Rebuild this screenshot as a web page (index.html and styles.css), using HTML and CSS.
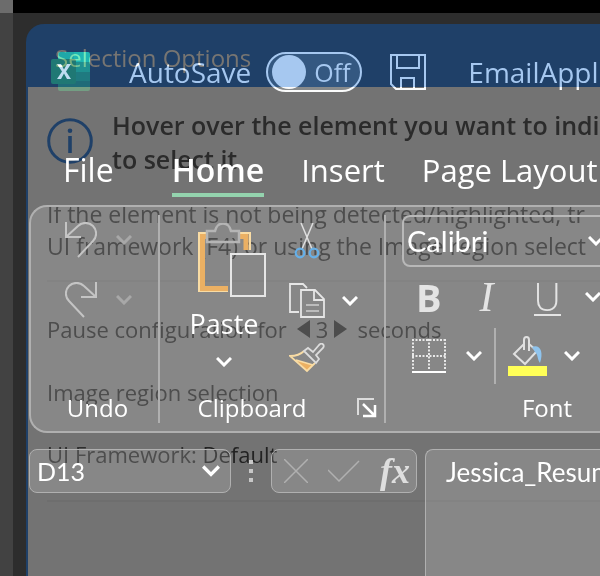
FILE: index.html
```html
<!DOCTYPE html>
<html lang="en">
<head>
<meta charset="utf-8">
<meta name="viewport" content="width=device-width, initial-scale=1">
<title>Selection Options</title>
<link rel="stylesheet" href="styles.css">
</head>
<body>
<div class="corner"></div>
<div class="topbar"></div>
<div class="side"></div>
<div class="desktop">
<div class="window">

<section class="dialog">
  <h1 class="dialog-title">Selection Options</h1>
  <div class="dialog-body">
    <div class="hint">
      <svg class="info" width="46" height="46" viewBox="0 0 46 46" fill="none" stroke="#1f4068" stroke-width="3"><circle cx="23" cy="23" r="21.3"/><path d="M23 18v17" stroke-width="3.6"/><circle cx="23" cy="12.7" r="2.3" fill="#1f4068" stroke="none"/></svg>
      <h2 class="hint-title">Hover over the element you want to indi<br>to select it.</h2>
    </div>
    <p class="note">If the element is not being detected/highlighted, tr<br>UI framework (F4) or using the Image region select</p>
    <div class="pause">
      <span>Pause configuration for</span>
      <span class="stepper">
        <button class="bare" aria-label="Less"><svg width="13" height="18" viewBox="0 0 13 18"><path d="M13 0v18L0 9z" fill="#2e2e2e"/></svg></button>
        <span>3</span>
        <button class="bare" aria-label="More"><svg width="13" height="18" viewBox="0 0 13 18"><path d="M0 0v18L13 9z" fill="#2e2e2e"/></svg></button>
      </span>
      <span>seconds</span>
    </div>
    <p class="option">Image region selection</p>
    <p class="option">UI Framework: <span class="value">Default</span></p>
    <hr class="rule">
  </div>
</section>

<section class="excel">
  <header class="appbar">
    <svg class="logo" width="40" height="40" viewBox="0 0 40 40"><path d="M7 2q0-2 2-2h14v19H7z" fill="#006840"/><path d="M23 0h14q2 0 2 2v8H23z" fill="#00764a"/><path d="M23 10h16v10H23z" fill="#005028"/><path d="M7 20h32v9H7z" fill="#003a18"/><path d="M7 29h32v8q0 2-2 2H9q-2 0-2-2z" fill="#002b10"/><rect y="7" width="25" height="25" rx="2" fill="#00380c"/><path d="M6 12h4l3 5.500 3-5.500h4l-5 7.500 5 7.500h-4l-3-5.500-3 5.500H6l5-7.500z" fill="#a09c88"/></svg>
    <span class="autosave" id="autosave">AutoSave</span>
    <button class="toggle" role="switch" aria-checked="false" aria-labelledby="autosave"><span class="knob"></span>Off</button>
    <button class="bare save" aria-label="Save"><svg width="36" height="36" viewBox="0 0 36 36" fill="none" stroke="#878888" stroke-width="2"><path d="M1 1h34v34H6l-5-5zM7 1v13h22V1M11 35V24h13v11"/></svg></button>
    <span class="filename">EmailAppl</span>
  </header>

  <nav class="tabs">
    <a class="tab file" href="#file">File</a>
    <a class="tab current" href="#home">Home</a>
    <a class="tab" href="#insert">Insert</a>
    <a class="tab" href="#layout">Page Layout</a>
  </nav>

  <div class="ribbon">
    <div class="group undo-group">
      <div class="tools undo-tools">
        <button class="bare" aria-label="Undo"><svg width="32" height="36" viewBox="0 0 32 36" fill="none" stroke="#c4c4c4" stroke-width="2"><path d="M1 0v15h15M1 15 13 4a10 10 0 0 1 15 15L13 35"/></svg></button>
        <button class="bare dim" aria-label="Undo list"><svg class="chev" viewBox="0 0 16 10"><path d="M1 1l7 7 7-7"/></svg></button>
        <button class="bare" aria-label="Redo"><svg width="32" height="36" viewBox="0 0 32 36" fill="none" stroke="#c4c4c4" stroke-width="2"><path d="M31 0v15H16M31 15 19 4A10 10 0 0 0 4 19l15 16"/></svg></button>
        <button class="bare dim" aria-label="Redo list"><svg class="chev" viewBox="0 0 16 10"><path d="M1 1l7 7 7-7"/></svg></button>
      </div>
      <div class="label">Undo</div>
    </div>

    <div class="group clip-group">
      <div class="tools clip-tools">
        <button class="bare paste">
          <svg width="84" height="74" viewBox="-16 0 84 74" fill="none"><path d="M10 10H1v58h29M42 10h10v17" stroke="#f9dca4" stroke-width="2"/><path d="M10 13.500H4.500v52H30M42 13.500h6V27" stroke="#ebb063" stroke-width="5"/><path d="M9 8h8C19 -2 31-2 33 8h8v11H9z" stroke="#b5b5b5" stroke-width="2.500"/><path d="M33 31h34v42H33z" stroke="#e6e6e6" stroke-width="2"/></svg>
          <span class="paste-text">Paste</span>
          <svg class="chev" viewBox="0 0 16 10"><path d="M1 1l7 7 7-7"/></svg>
        </button>
        <div class="clip-small">
          <button class="bare" aria-label="Cut"><svg width="36" height="36" viewBox="0 0 36 36" fill="none"><path d="M12 0l11 26M24 0L13 26" stroke="#dedede" stroke-width="1.500"/><circle cx="11" cy="30" r="4.300" stroke="#66b0e8" stroke-width="2.200"/><circle cx="25" cy="30" r="4.300" stroke="#66b0e8" stroke-width="2.200"/></svg></button>
          <div class="pair">
            <button class="bare" aria-label="Copy"><svg width="36" height="36" viewBox="0 0 36 36" fill="none" stroke="#e6e6e6" stroke-width="1.800"><path d="M10 29H1V1h13l4 4M12 7h14l9 9v18H12zM25 7v10h10"/><path d="M17 22h13M17 28h13" stroke="#bcbcbc"/></svg></button>
            <button class="bare" aria-label="Copy list"><svg class="chev" viewBox="0 0 16 10"><path d="M1 1l7 7 7-7"/></svg></button>
          </div>
          <button class="bare" aria-label="Format Painter"><svg width="36" height="30" viewBox="0 0 36 30" fill="none" stroke-width="1.800"><path d="M7 17l17 5-6 6z" fill="#ebb063"/><path d="M15 8C11 12 7 13 1 13l17 15 8-8M7 17l17 5" stroke="#f9dca4"/><path d="M15 8l4-3 5 4 6-7c3-3 6 0 4 3l-7 7 3 4-3 4z" stroke="#dcdcdc"/></svg></button>
        </div>
      </div>
      <div class="label">Clipboard</div>
      <button class="bare launcher" aria-label="Clipboard settings"><svg width="20" height="20" viewBox="0 0 20 20" fill="none"><path d="M1 17V1h16" stroke="#dcdcdc" stroke-width="2"/><path d="M6 6l11 11M6 18h12V7" stroke="#fff" stroke-width="2.500"/></svg></button>
    </div>

    <div class="group font-group">
      <div class="font-box">
        <select class="font-name" aria-label="Font name"><option>Calibri</option></select>
        <svg class="chev" viewBox="0 0 16 10"><path d="M1 1l7 7 7-7"/></svg>
      </div>
      <div class="row styles">
        <button class="bare bold">B</button>
        <button class="bare italic">I</button>
        <button class="bare under">U</button>
        <button class="bare" aria-label="Underline list"><svg class="chev" viewBox="0 0 16 10"><path d="M1 1l7 7 7-7"/></svg></button>
      </div>
      <div class="row fills">
        <button class="bare borders" aria-label="Borders"><svg width="34" height="34" viewBox="0 0 34 34" fill="none" stroke="#e8e8e8" stroke-width="2"><path d="M0 1h34M1 0v30M33 0v30M17 0v30M0 17h34" stroke-dasharray="2 1.500"/><path d="M0 33h34" stroke="#fff"/></svg></button>
        <button class="bare" aria-label="Borders list"><svg class="chev" viewBox="0 0 16 10"><path d="M1 1l7 7 7-7"/></svg></button>
        <span class="split"></span>
        <button class="bare fill" aria-label="Fill colour"><svg width="40" height="40" viewBox="0 0 40 40" fill="none"><path d="M16 8L6 18l11 10 12-13-8-7M16 14V4q0-3 2.500-3T21 4v11" stroke="#e0e0e0" stroke-width="2"/><path d="M24 11c8-3 12 5 8 16-3-4-2-9-5-11z" fill="#8fc4ee"/><path d="M0 30h39v10H0z" fill="#ffff57"/></svg></button>
        <button class="bare" aria-label="Fill list"><svg class="chev" viewBox="0 0 16 10"><path d="M1 1l7 7 7-7"/></svg></button>
      </div>
      <div class="label font-label">Font</div>
    </div>
  </div>

  <div class="formula-row">
    <div class="name-box">
      <input class="name-input" aria-label="Name box" value="D13">
      <button class="bare" aria-label="Names"><svg class="chev big" viewBox="0 0 16 10"><path d="M1 1l7 7 7-7"/></svg></button>
    </div>
    <svg class="dots" width="4" height="22" viewBox="0 0 4 22" fill="#c8c8c8"><path d="M0 0h4v4H0zM0 9h4v4H0zM0 18h4v4H0z"/></svg>
    <div class="fx-box">
      <button class="bare" aria-label="Cancel"><svg width="24" height="24" viewBox="0 0 24 24" fill="none" stroke="#b0b0b0" stroke-width="1.500"><path d="M0 0l24 24M24 0L0 24"/></svg></button>
      <button class="bare" aria-label="Enter"><svg width="32" height="22" viewBox="0 0 32 22" fill="none" stroke="#b0b0b0" stroke-width="1.500"><path d="M0 10l11 11L31 1"/></svg></button>
      <button class="bare fx">fx</button>
    </div>
    <div class="formula"><input class="formula-input" aria-label="Formula bar" value="Jessica_Resume"></div>
  </div>
</section>

</div>
</div>
</body>
</html>
```

FILE: styles.css
```css
* { box-sizing: border-box; }
body {
  margin: 0;
  min-height: 100vh;
  display: grid;
  grid-template: 13px 1fr / 13px minmax(0, 1fr);
  background: #2d2d2d;
  font: 24px/32px "Open Sans", "Noto Sans", sans-serif;
  white-space: nowrap;
  overflow: hidden;
}
.corner { background: #6c6c6c; }
.topbar { background: #000; }
.side { background: #424242; }
.desktop { padding: 11px 0 0 13px; display: grid; min-width: 0; }
.window {
  display: grid;
  grid-template-columns: minmax(0, 1fr);
  padding-left: 2px;
  background: #1f4068;
  border-top-left-radius: 18px;
  overflow: hidden;
}
.dialog, .excel { grid-area: 1 / 1; min-width: 0; display: flex; flex-direction: column; }
h1, h2, p { margin: 0; font-weight: 400; }
svg { display: block; flex: none; }
.bare {
  border: 0; padding: 0; background: none; color: #fff;
  font: inherit; line-height: inherit; flex: none;
}
input, select { border: 0; padding: 0; background: none; color: #fff; outline: 0; min-width: 0; }
.chev { width: 16px; height: 10px; fill: none; stroke: #fff; stroke-width: 3; }
.big { width: 18px; height: 12px; }
.dim .chev { stroke: #a8a8a8; }

/* Dialog under the spreadsheet */
.dialog-title { height: 63px; padding: 18px 0 0 27px; font-size: 24px; color: #777572; }
.dialog-body { flex: 1; padding: 21px 0 0 19px; background: #737373; color: #2e2e2e; font-size: 22px; }
.hint { display: flex; gap: 19px; }
.info { margin-top: 10px; }
.hint-title { font-size: 25px; line-height: 34px; font-weight: 600; color: #2b2b2b; }
.note { margin-top: 22px; padding-bottom: 18px; border-bottom: 2px solid #6e6e6e; font-size: 23px; }
.pause { display: flex; align-items: center; gap: 10px; height: 94px; }
.stepper { display: flex; align-items: center; gap: 6px; }
.option { margin-bottom: 30px; }
.value { color: #222; }
.rule { margin: 0; border: 0; border-top: 2px solid #6e6e6e; }

/* Title bar adds its light to what lies below */
.appbar {
  display: flex; align-items: center; height: 96px; padding-left: 23px;
  mix-blend-mode: plus-lighter; color: #878888; font-size: 28px;
}
.autosave { margin-left: 38px; }
.toggle {
  display: flex; align-items: center; gap: 8px;
  width: 96px; height: 40px; margin-left: 15px; padding: 0 4px;
  border: 2px solid #878888; border-radius: 20px;
  background: #151819; color: inherit; font: inherit; font-size: 25px;
}
.knob { width: 34px; height: 34px; border-radius: 50%; background: #878888; flex: none; }
.save { margin: 0 42px 0 28px; }

.tabs { display: flex; gap: 37px; height: 77px; padding-left: 35px; font-size: 32px; }
.tab { color: #fff; text-decoration: none; padding-top: 34px; height: 77px; }
.file { margin-right: 21px; }
.current { font-weight: 600; border-bottom: 4px solid #94d3ae; }
.current ~ .tab { font-size: 31px; }

.ribbon {
  display: flex; margin-top: 8px; height: 228px; padding: 8px 0;
  border: 2px solid #b0b0b0; border-right: 0;
  border-radius: 18px 0 0 18px; margin-left: 1px;
  background: rgba(255, 255, 255, .15);
}
.group { flex: none; display: grid; grid-template-rows: 1fr 30px; border-right: 2px solid #b0b0b0; }
.label { font-size: 24px; line-height: 30px; color: #fff; text-align: center; align-self: end; }
.undo-group { width: 129px; }
.undo-group .label { padding-left: 6px; }
.undo-tools { display: grid; grid-template-columns: 32px 16px; gap: 24px 19px; padding: 7px 0 0 34px; align-content: start; align-items: center; }
.clip-group { width: 226px; grid-template-columns: 1fr 20px; padding: 0 7px 0 22px; }
.clip-tools { grid-column: 1 / -1; display: flex; gap: 23px; padding-top: 8px; }
.paste { display: flex; flex-direction: column; align-items: center; align-self: start; gap: 9px; font-size: 27px; }
.paste-text { line-height: 36px; padding-bottom: 6px; }
.clip-small { display: flex; flex-direction: column; align-items: start; gap: 24px; }
.pair { display: flex; align-items: center; gap: 17px; }
.clip-group .label { padding-right: 35px; }
.launcher { align-self: center; }
.font-group { width: 320px; grid-template-rows: 52px 60px 58px 1fr; border: 0; padding-left: 16px; }
.font-box { display: flex; align-items: center; justify-content: space-between; width: 210px; height: 52px; padding: 0 6px 0 3px; border: 2px solid #b8b8b8; border-radius: 8px; }
.font-name { appearance: none; flex: 1; font: 29px/36px Lato, "Open Sans", sans-serif; }
.row { display: flex; align-items: center; }
.styles { font-size: 38px; line-height: 36px; gap: 24px; padding-left: 14px; }
.styles .bare { color: #e4e4e4; }
.bold { font-weight: 700; margin-right: 14px; }
.italic { font-family: "Liberation Serif", serif; font-style: italic; font-size: 42px; margin-right: 16px; }
.under { font-weight: 300; border-bottom: 2px solid #e4e4e4; }
.fills { gap: 12px; padding-left: 10px; }
.borders { margin-right: 8px; }
.fill { margin-right: 4px; }
.split { width: 2px; height: 56px; background: #b0b0b0; }
.font-label { padding-right: 14px; }

.formula-row { display: flex; flex: 1; margin: 16px 0 0 1px; }
.name-box, .fx-box, .formula { border: 1px solid #b0b0b0; border-radius: 8px; background: rgba(255, 255, 255, .15); height: 44px; }
.name-box { display: flex; align-items: center; width: 202px; padding: 0 10px 0 7px; }
.name-input, .formula-input { flex: 1; width: 100%; height: 44px; font: 26px/42px Lato, "Open Sans", sans-serif; }
.name-input { font-size: 25px; }
.dots { margin: 11px 18px 0; }
.fx-box { display: flex; align-items: center; gap: 20px; width: 146px; padding: 0 10px 0 12px; }
.fx { font: italic 700 36px/40px "Liberation Serif", serif; color: #dedede; }
.formula { flex: 1; height: auto; margin-left: 8px; padding-left: 20px; border-right: 0; border-bottom: 0; border-radius: 8px 0 0 0; }
```
